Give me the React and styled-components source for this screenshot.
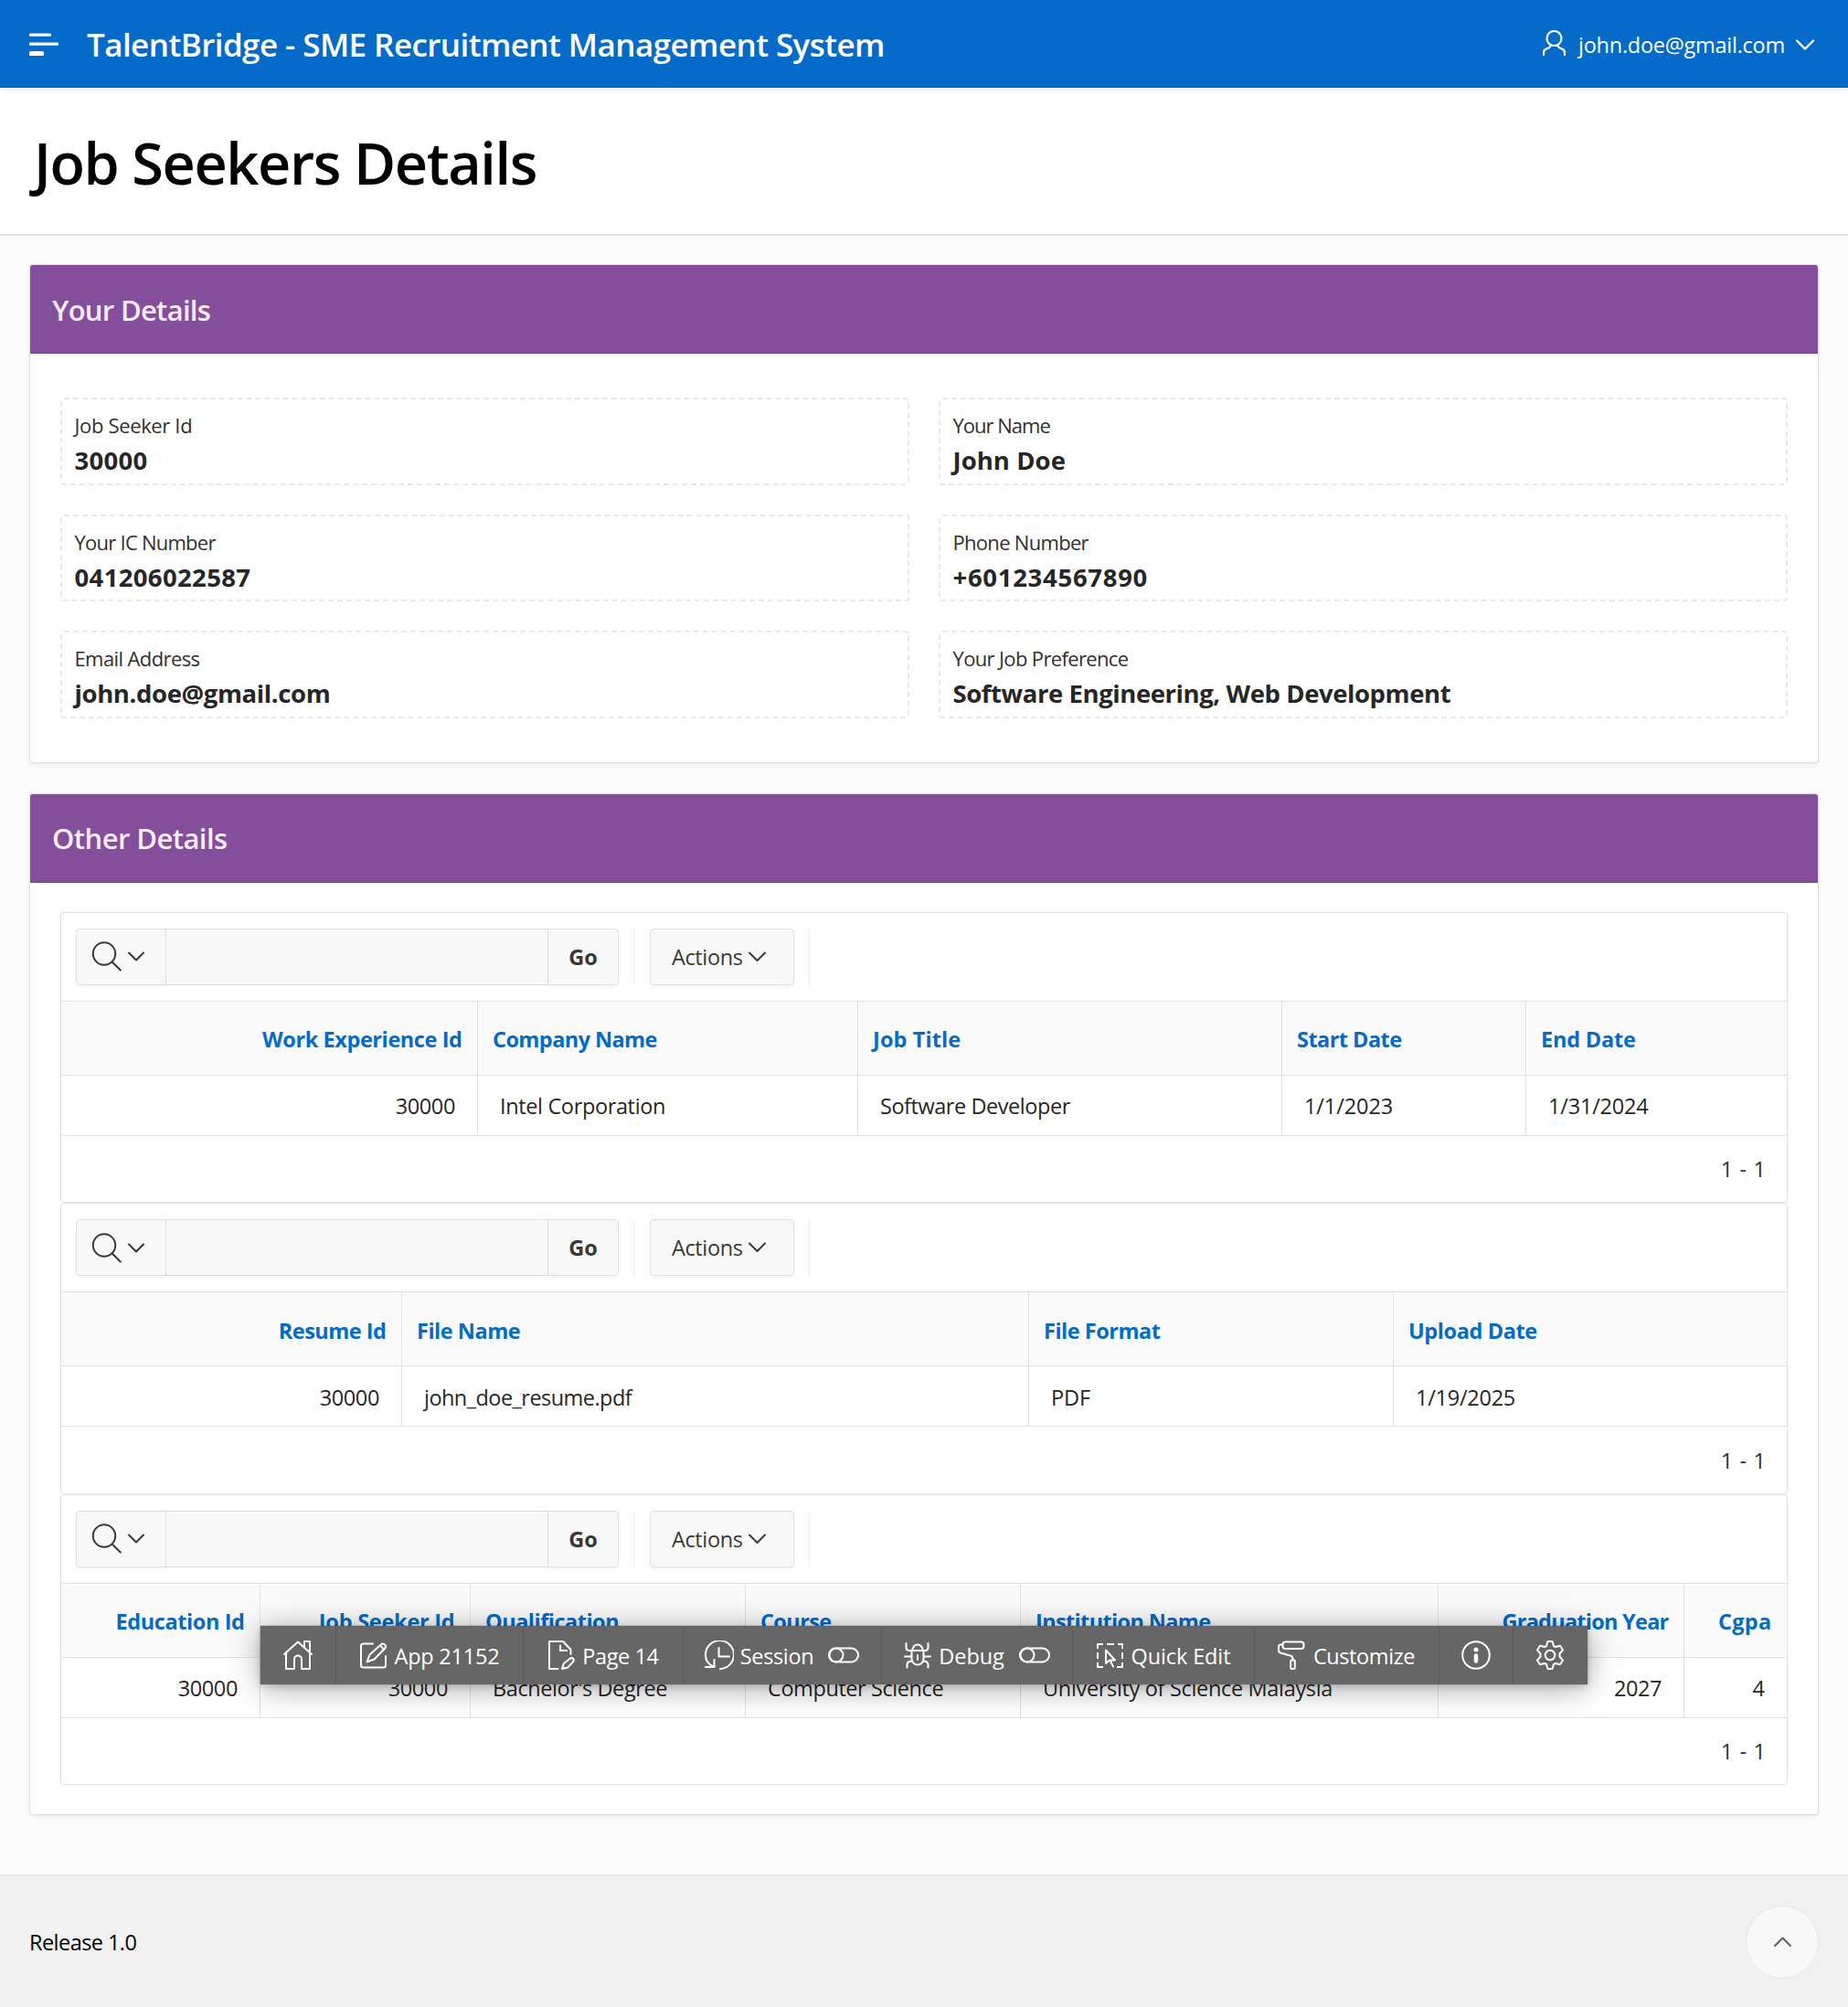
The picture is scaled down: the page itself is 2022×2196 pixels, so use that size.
import React from "react";
import styled, { createGlobalStyle } from "styled-components";

const LINE = "#e2e2e2";
const LINK = "#056ac8";

const GlobalStyle = createGlobalStyle`
  *, *::before, *::after { box-sizing: border-box; }
  body {
    margin: 0;
    background: #fcfcfc;
    color: #262626;
    font-family: "Open Sans", "Noto Sans", sans-serif;
    font-size: 23.5px;
    line-height: 32px;
  }
  svg { display: block; flex: none; }
  button, input { font: inherit; color: inherit; margin: 0; }
`;

const Page = styled.div`
  position: relative;
  display: flex;
  flex-direction: column;
  width: 2022px;
  height: 2196px;
  overflow: hidden;
`;

const Txt = styled.span`
  letter-spacing: ${(p) => p.$ls || 0}px;
  white-space: nowrap;
`;

const AppHeader = styled.header`
  position: relative;
  display: flex;
  align-items: center;
  flex: none;
  height: 96px;
  padding: 0 37px 0 32px;
  background: ${LINK};
  color: #fff;
  box-shadow: inset 0 -1px 0 #0560b4, 0 1px 8px rgba(0, 0, 0, 0.1);
`;

const AppName = styled.div`
  margin-left: 31px;
  padding-top: 2px;
  font-size: 35px;
  font-weight: 600;
`;

const UserMenu = styled.div`
  display: flex;
  align-items: center;
  margin-left: auto;
  padding-top: 1px;
  svg:first-child { margin: -3px 14px 0 0; }
  svg:last-child { margin: 0 0 0 12px; }
`;

const TitleBar = styled.div`
  display: flex;
  align-items: center;
  flex: none;
  height: 162px;
  padding: 0 32px 0 37px;
  background: #fff;
  border-bottom: 2px solid #e2e2e2;
`;

const Title = styled.h1`
  margin: 4px 0 0;
  color: #000;
  font-size: 63px;
  font-weight: 600;
  line-height: 80px;
`;

const Main = styled.main`
  display: flex;
  flex-direction: column;
  gap: 33px;
  flex: 1;
  padding: 31px 32px 0;
`;

const Region = styled.section`
  flex: none;
  background: #fff;
  border: 1px solid #e0e0e0;
  border-radius: 4px;
  box-shadow: 0 3px 6px -1px rgba(0, 0, 0, 0.07), 0 0 1px rgba(0, 0, 0, 0.12);
`;

const RegionHeader = styled.h2`
  display: flex;
  align-items: center;
  height: 97px;
  margin: 0;
  padding: 1px 24px 0;
  background: #854e9b;
  border-bottom: 1px solid #7b4592;
  border-radius: 3px 3px 0 0;
  color: #f6ecf9;
  font-size: 31px;
  font-weight: 600;
`;

const FieldGrid = styled.div`
  display: grid;
  grid-template-columns: 1fr 1fr;
  gap: 32px;
  padding: 48px 33px;
`;

const Field = styled.div`
  display: flex;
  flex-direction: column;
  height: 95.5px;
  padding: 13px 14px 0 13.5px;
  border: 2px dashed #e8e8e8;
  border-radius: 4px;
`;

const FieldLabel = styled.div`
  font-size: 22px;
  line-height: 31px;
  color: #303030;
`;

const FieldValue = styled.div`
  font-size: 27.5px;
  font-weight: 700;
  line-height: 45px;
`;

const ReportList = styled.div`
  display: flex;
  flex-direction: column;
  padding: 32px 33px;
`;

const Report = styled.div`
  display: flex;
  flex-direction: column;
  height: 318.5px;
  border: 1px solid ${LINE};
  border-radius: 4px;
  box-shadow: 0 0 0 0.5px #efefef;
`;

const ReportToolbar = styled.div`
  display: flex;
  align-items: stretch;
  flex: none;
  height: 96px;
  padding: 17px 16px;
`;

const SearchGroup = styled.div`
  display: flex;
  width: 594px;
`;

const Button = styled.button`
  display: flex;
  align-items: center;
  justify-content: center;
  gap: ${(p) => p.$gap || 7}px;
  padding: 0 ${(p) => p.$shift || 0}px 0 0;
  width: ${(p) => p.$w}px;
  background: #f8f8f8;
  border: 1px solid #e0e0e0;
  border-radius: ${(p) => p.$radius || "4px"};
  box-shadow: 0 3px 5px -2px rgba(0, 0, 0, 0.08);
  color: #383838;
  font-weight: ${(p) => (p.$bold ? 700 : 400)};
`;

const SearchInput = styled.input`
  flex: 1;
  min-width: 0;
  padding: 0 12px;
  background: #f9f9f9;
  border: 1px solid #dcdcdc;
  margin: 0 -1px;
  z-index: 1;
`;

const Separator = styled.div`
  width: 1px;
  margin: 0 17px 0 16px;
  background: #ececec;
`;

const Row = styled.div`
  display: grid;
  grid-template-columns: ${(p) => p.$cols};
  flex: none;
`;

const HeadRow = styled(Row)`
  height: 82px;
  background: #fafafa;
  border-top: 1px solid ${LINE};
  border-bottom: 1px solid ${LINE};
`;

const BodyRow = styled(Row)`
  height: 66px;
  border-bottom: 1px solid ${LINE};
`;

const Cell = styled.div`
  display: flex;
  align-items: center;
  justify-content: ${(p) => (p.$right ? "flex-end" : "flex-start")};
  padding: 2px 24px 0;
  & + & { border-left: 1px solid ${LINE}; }
`;

const HeadCell = styled(Cell)`
  padding: 3px 16.5px 0 16px;
  color: ${LINK};
  font-weight: 700;
`;

const Pagination = styled.div`
  display: flex;
  align-items: center;
  justify-content: flex-end;
  flex: 1;
  padding: 1px 22.5px 0 0;
  color: #303030;
`;

const Footer = styled.footer`
  display: flex;
  align-items: center;
  justify-content: space-between;
  flex: none;
  height: 145px;
  padding: 0 32px 0 32px;
  background: #f1f1f1;
  border-top: 2px solid #e7e7e7;
  color: #000;
`;

const TopButton = styled.button`
  display: flex;
  align-items: center;
  justify-content: center;
  width: 80px;
  height: 80px;
  padding: 0;
  border: 1.5px solid #e6e6e6;
  border-radius: 50%;
  background: #f8f8f8;
  color: #606060;
`;

const DevToolbar = styled.nav`
  position: absolute;
  left: 285px;
  top: 1779px;
  display: flex;
  height: 64px;
  background: #666;
  color: #fff;
  box-shadow: 0 0 1px rgba(0, 0, 0, 0.5), 0 2px 8px rgba(0, 0, 0, 0.16), 0 4px 34px rgba(0, 0, 0, 0.34);
`;

const DevButton = styled.div`
  display: flex;
  align-items: center;
  justify-content: center;
  gap: 7px;
  width: ${(p) => p.$w}px;
  padding-top: 1px;
  & + & { border-left: 1px solid #5b5b5b; padding-right: 1px; }
  svg { margin-top: -2px; }
  svg + span + svg { margin-left: 9px; }
`;

const Icon = ({ w = 32, h = 32, sw = 2, children }) => (
  <svg width={w} height={h} viewBox={`0 0 ${w} ${h}`} fill="none" stroke="currentColor" strokeWidth={sw} strokeLinecap="round" strokeLinejoin="round">
    {children}
  </svg>
);

const MenuIcon = () => (
  <Icon w={32} h={26}>
    <g fill="#fff" stroke="none">
      <rect x="0" y="1.5" width="24" height="3.2" rx="1.2" />
      <rect x="0" y="11.4" width="32" height="3.4" rx="1.2" />
      <rect x="0" y="21" width="16" height="5" rx="1.6" />
    </g>
  </Icon>
);
const UserIcon = () => (
  <Icon w={25} h={28} sw={2.2}>
    <circle cx="12.5" cy="9" r="8" />
    <path d="M1 27v-2.500c0-2.500 1.500-3.700 3.500-4.300 2-.6 3.600-1.400 4.700-3.700M24 27v-2.500c0-2.500-1.500-3.700-3.500-4.300-2-.6-3.600-1.400-4.700-3.700" />
  </Icon>
);
const Chevron = ({ w = 18, up = false, sw = 2 }) => (
  <Icon w={w} h={w / 2 + 2} sw={sw}>
    <path d={up ? `M1 ${w / 2 + 0.5}L${w / 2} 1.500L${w - 1} ${w / 2 + 0.5}` : `M1 1.500L${w / 2} ${w / 2 + 0.5}L${w - 1} 1.500`} />
  </Icon>
);
const SearchIcon = () => (
  <Icon w={33} h={33}>
    <circle cx="14" cy="13.500" r="12.2" />
    <path d="M22.700 22.500L31.800 31.500" />
  </Icon>
);
const HomeIcon = () => (
  <Icon>
    <path d="M1 15L16 1.500L31 15M3 13.500V31h9V20.500a3.500 3.500 0 0 1 8 0V31h9V13.500M23 6.500V1h6v11" />
  </Icon>
);
const EditIcon = () => (
  <Icon>
    <path d="M15 3.500H4.500a2.500 2.500 0 0 0-2.500 2.500v21a2.500 2.500 0 0 0 2.500 2.500h22a2.500 2.500 0 0 0 2.500-2.500V17M8.500 23.500l3-8L24.300 4c2-1.800 6.200 1.800 4.200 4.200L16.500 20.500zM23 5.500l4.200 4.200" />
  </Icon>
);
const PageIcon = () => (
  <Icon>
    <path d="M12.500 31H3V1h15l8.500 9v5M15 5.500V11h7M17 31l1.800-5.800 6.800-5.400c2.800-1.800 5.200.8 3.600 3.200l-6 6.600z" />
  </Icon>
);
const SessionIcon = () => (
  <Icon>
    <path d="M10.500 29C4.500 26.500 1 21.500 1 16a15.500 15.500 0 1 1 16 15M1 29h9.500V21M15.500 8v9.500H27" />
  </Icon>
);
const BugIcon = () => (
  <Icon>
    <path d="M9.500 11h13v9a6.500 6.500 0 0 1-13 0zM10.500 10.500a5.500 6 0 0 1 11 0M3.500 3v5c0 2 1.500 3 3.500 3h2.500M27.500 3v5c0 2-1.500 3-3.500 3h-2.500M2 17.500h7.500M22.500 17.500H30M4.500 29.500v-3c0-2.500 1.500-4 5.500-4M27.500 29.500v-3c0-2.500-1.500-4-5.500-4M16 16v5" />
  </Icon>
);
const QuickEditIcon = () => (
  <Icon>
    <path strokeLinecap="butt" d="M2 9V4h6M12 4h8M24 4h5v5M29 13v7M29 24v5h-6M8 29H2v-5M2 13v7" />
    <path d="M11 10.500V25l4-3.500h6zM15.500 21.500l3.500 7" />
  </Icon>
);
const RollerIcon = () => (
  <Icon>
    <rect x="5.500" y="1.500" width="23" height="7.500" rx="2.800" />
    <path d="M5.500 4.500H3.500A2.500 2.500 0 0 0 1 7v3.500c0 1.800 1 2.700 2.800 3.200l9.900 2.800c2 .5 2.800 1.500 2.800 3.500v1.500" />
    <rect x="14.200" y="21.500" width="4.600" height="9.500" rx=".8" />
  </Icon>
);
const InfoIcon = () => (
  <Icon>
    <circle cx="16" cy="16" r="14.800" />
    <path strokeWidth="4.500" d="M16 16.500v6" />
    <circle cx="16" cy="10" r="2.500" fill="currentColor" stroke="none" />
  </Icon>
);
const GearIcon = () => (
  <Icon>
    <circle cx="16" cy="16" r="5.300" />
    <path d="M13.500 1h5l1.500 5 2 1 5-1.300 3 4.600-3.500 4.200v3L30 21.700l-3 4.600-5-1.300-2 1-1.500 5h-5L12 26l-2-1-5 1.300-3-4.600 3.500-4.200v-3L2 10.300l3-4.600L10 7l2-1z" />
  </Icon>
);
const ToggleIcon = () => (
  <Icon w={34}>
    <rect x="1" y="8.500" width="32" height="15" rx="7.500" />
    <circle cx="9" cy="16" r="7.500" />
  </Icon>
);

const FIELDS = [
  ["Job Seeker Id", "30000", -0.35, 0.3],
  ["Your Name", "John Doe", -1, 0.05],
  ["Your IC Number", "041206022587", -0.75, 0.35],
  ["Phone Number", "+601234567890", -0.7, 0.7],
  ["Email Address", "john.doe@gmail.com", -0.6, -0.38],
  ["Your Job Preference", "Software Engineering, Web Development", -0.64, -0.42],
];

const REPORTS = [
  {
    cols: "455px 416px 464px 267px 1fr",
    columns: [
      { head: "Work Experience Id", hls: -0.42, value: "30000", vls: -0.37, right: true },
      { head: "Company Name", hls: -0.58, value: "Intel Corporation", vls: -0.36 },
      { head: "Job Title", hls: 0.1, value: "Software Developer", vls: -0.45 },
      { head: "Start Date", hls: -0.54, value: "1/1/2023", vls: -0.1 },
      { head: "End Date", hls: -0.2, value: "1/31/2024", vls: -0.2 },
    ],
  },
  {
    cols: "372px 686px 399px 1fr",
    columns: [
      { head: "Resume Id", hls: -0.5, value: "30000", vls: -0.37, right: true },
      { head: "File Name", hls: -0.48, value: "john_doe_resume.pdf", vls: -0.54 },
      { head: "File Format", hls: -0.48, value: "PDF", vls: -0.1 },
      { head: "Upload Date", hls: -0.4, value: "1/19/2025", vls: -0.25 },
    ],
  },
  {
    cols: "217px 230px 301px 301px 457px 269px 1fr",
    columns: [
      { head: "Education Id", hls: -0.4, value: "30000", vls: -0.37, right: true },
      { head: "Job Seeker Id", hls: -0.25, value: "30000", vls: -0.37, right: true },
      { head: "Qualification", hls: -0.5, value: "Bachelor's Degree", vls: -0.43 },
      { head: "Course", hls: -0.6, value: "Computer Science", vls: -0.42 },
      { head: "Institution Name", hls: -0.64, value: "University of Science Malaysia", vls: -0.33 },
      { head: "Graduation Year", hls: -0.75, value: "2027", vls: -0.45, right: true },
      { head: "Cgpa", hls: 0.3, value: "4", vls: 0, right: true },
    ],
  },
];

const DEV_ITEMS = [
  { icon: HomeIcon, w: 82 },
  { icon: EditIcon, text: "App 21152", ls: -0.22, w: 205 },
  { icon: PageIcon, text: "Page 14", ls: -0.4, w: 175 },
  { icon: SessionIcon, text: "Session", ls: -0.36, w: 217, toggle: true },
  { icon: BugIcon, text: "Debug", ls: -0.1, w: 209, toggle: true },
  { icon: QuickEditIcon, text: "Quick Edit", ls: -0.12, w: 199 },
  { icon: RollerIcon, text: "Customize", ls: -0.42, w: 202 },
  { icon: InfoIcon, w: 81 },
  { icon: GearIcon, w: 82 },
];

const InteractiveReport = ({ cols, columns }) => (
  <Report>
    <ReportToolbar>
      <SearchGroup>
        <Button $w={99} $radius="4px 0 0 4px" $shift={8}><SearchIcon /><Chevron /></Button>
        <SearchInput aria-label="Search" />
        <Button $w={78} $radius="0 4px 4px 0" $bold><Txt>Go</Txt></Button>
      </SearchGroup>
      <Separator />
      <Button $w={158} $gap={6.5} $shift={7}><Txt $ls={-0.38}>Actions</Txt><Chevron w={19} /></Button>
      <Separator />
    </ReportToolbar>
    <HeadRow $cols={cols}>
      {columns.map((c) => (
        <HeadCell key={c.head} $right={c.right}><Txt $ls={c.hls}>{c.head}</Txt></HeadCell>
      ))}
    </HeadRow>
    <BodyRow $cols={cols}>
      {columns.map((c) => (
        <Cell key={c.head} $right={c.right}><Txt $ls={c.vls}>{c.value}</Txt></Cell>
      ))}
    </BodyRow>
    <Pagination><Txt $ls={0.6}>1 - 1</Txt></Pagination>
  </Report>
);

export default function App() {
  return (
    <>
      <GlobalStyle />
      <Page>
        <AppHeader>
          <MenuIcon />
          <AppName><Txt $ls={-0.57}>TalentBridge - SME Recruitment Management System</Txt></AppName>
          <UserMenu>
            <UserIcon />
            <Txt $ls={-0.26}>john.doe@gmail.com</Txt>
            <Chevron w={20} sw={2.4} />
          </UserMenu>
        </AppHeader>
        <TitleBar>
          <Title><Txt $ls={-1.4}>Job Seekers Details</Txt></Title>
        </TitleBar>
        <Main>
          <Region>
            <RegionHeader><Txt $ls={-0.7}>Your Details</Txt></RegionHeader>
            <FieldGrid>
              {FIELDS.map(([label, value, lls, vls]) => (
                <Field key={label}>
                  <FieldLabel><Txt $ls={lls}>{label}</Txt></FieldLabel>
                  <FieldValue><Txt $ls={vls}>{value}</Txt></FieldValue>
                </Field>
              ))}
            </FieldGrid>
          </Region>
          <Region>
            <RegionHeader><Txt $ls={-0.56}>Other Details</Txt></RegionHeader>
            <ReportList>
              {REPORTS.map((r) => <InteractiveReport key={r.cols} {...r} />)}
            </ReportList>
          </Region>
        </Main>
        <Footer>
          <Txt $ls={-0.55}>Release 1.0</Txt>
          <TopButton aria-label="Back to top"><Chevron up w={19} /></TopButton>
        </Footer>
        <DevToolbar>
          {DEV_ITEMS.map(({ icon: Glyph, text, ls, w, toggle }, i) => (
            <DevButton key={i} $w={w}>
              <Glyph />
              {text && <Txt $ls={ls}>{text}</Txt>}
              {toggle && <ToggleIcon />}
            </DevButton>
          ))}
        </DevToolbar>
      </Page>
    </>
  );
}
